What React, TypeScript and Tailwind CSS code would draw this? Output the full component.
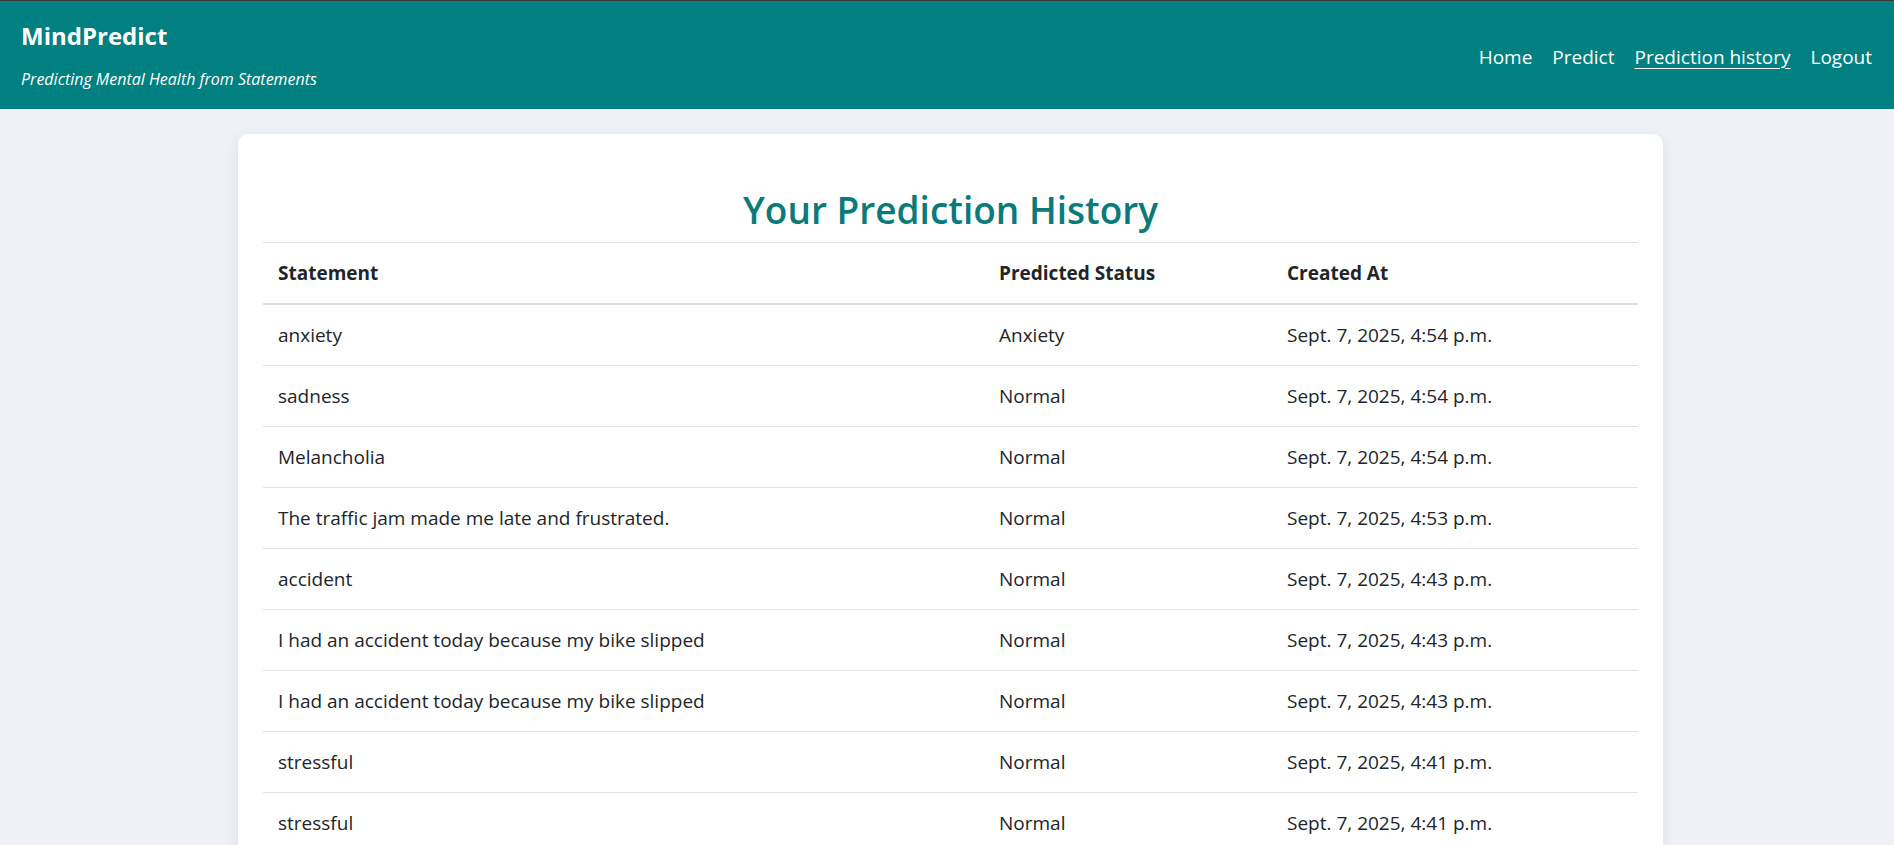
const rows = [
  { statement: 'anxiety', status: 'Anxiety', created: 'Sept. 7, 2025, 4:54 p.m.' },
  { statement: 'sadness', status: 'Normal', created: 'Sept. 7, 2025, 4:54 p.m.' },
  { statement: 'Melancholia', status: 'Normal', created: 'Sept. 7, 2025, 4:54 p.m.' },
  { statement: 'The traffic jam made me late and frustrated.', status: 'Normal', created: 'Sept. 7, 2025, 4:53 p.m.' },
  { statement: 'accident', status: 'Normal', created: 'Sept. 7, 2025, 4:43 p.m.' },
  { statement: 'I had an accident today because my bike slipped', status: 'Normal', created: 'Sept. 7, 2025, 4:43 p.m.' },
  { statement: 'I had an accident today because my bike slipped', status: 'Normal', created: 'Sept. 7, 2025, 4:43 p.m.' },
  { statement: 'stressful', status: 'Normal', created: 'Sept. 7, 2025, 4:41 p.m.' },
  { statement: 'stressful', status: 'Normal', created: 'Sept. 7, 2025, 4:41 p.m.' },
  { statement: 'I feel tired all the time', status: 'Normal', created: 'Sept. 7, 2025, 4:40 p.m.' },
];

export default function App() {
  return (
    <div className="min-h-screen bg-[#eef1f6] font-['Segoe_UI','Open_Sans',sans-serif] text-[#212529]">
      <header className="h-[109px] bg-[#008080] border-t border-[#3a3a3a] flex items-start justify-between pl-[21px] pr-[22px]">
        <div className="pt-[19px]">
          <h1 className="text-[24px] leading-[32px] font-bold text-white">MindPredict</h1>
          <p className="mt-[17px] text-[16px] leading-[20px] italic text-white">Predicting Mental Health from Statements</p>
        </div>
        <nav className="flex gap-[20px] pt-[43px] text-[19px] leading-[26px] text-white">
          <a href="#">Home</a>
          <a href="#">Predict</a>
          <a href="#" className="underline underline-offset-[4px]">Prediction history</a>
          <a href="#">Logout</a>
        </nav>
      </header>

      <main className="pt-[25px] pb-10">
        <div className="ml-[238px] w-[1425px] bg-white rounded-[10px] shadow-[0_4px_14px_rgba(0,0,0,0.08)] pt-[52px] px-[25px] pb-[24px]">
          <h2 className="text-center text-[37px] leading-[48px] mb-[8px] font-semibold text-[#0b7a7a]">Your Prediction History</h2>
          <table className="w-full border-collapse text-left text-[19px]">
            <thead>
              <tr className="border-t border-b-2 border-t-[#e1e3e8] border-b-[#dcdfe4]">
                <th className="w-[721px] px-[15px] py-[16px] leading-[28px] font-bold">Statement</th>
                <th className="w-[288px] px-[15px] py-[16px] leading-[28px] font-bold">Predicted Status</th>
                <th className="px-[15px] py-[16px] leading-[28px] font-bold">Created At</th>
              </tr>
            </thead>
            <tbody>
              {rows.map((r, i) => (
                <tr key={i} className="border-b border-[#e1e3e8]">
                  <td className="px-[15px] py-[16px] leading-[28px]">{r.statement}</td>
                  <td className="px-[15px] py-[16px] leading-[28px]">{r.status}</td>
                  <td className="px-[15px] py-[16px] leading-[28px]">{r.created}</td>
                </tr>
              ))}
            </tbody>
          </table>
        </div>
      </main>
    </div>
  );
}
